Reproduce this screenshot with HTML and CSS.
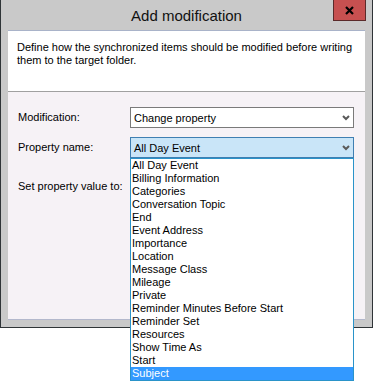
FILE: index.html
```html
<!DOCTYPE html>
<html>
<head>
<meta charset="utf-8">
<link rel="stylesheet" href="styles.css">
</head>
<body>
<div class="window">
  <div class="titlebar">
    <span class="title">Add modification</span>
    <div class="close">
      <svg width="9" height="9" viewBox="0 0 9 9"><path d="M1 1 L8 8 M8 1 L1 8" stroke="#000" stroke-width="2.2" fill="none"/></svg>
    </div>
  </div>
  <div class="client">
    <div class="header">
      <p>Define how the synchronized items should be modified before writing them to the target folder.</p>
    </div>
    <div class="body">
      <div class="row">
        <span class="label">Modification:</span>
        <div class="combo-wrap">
          <div class="combo"><span>Change property</span>
            <svg class="chev" width="8" height="6" viewBox="0 0 8 6"><polyline points="1,1 4,4 7,1" fill="none" stroke="#5a5a5a" stroke-width="2"/></svg>
          </div>
        </div>
      </div>
      <div class="row">
        <span class="label">Property name:</span>
        <div class="combo-wrap">
          <div class="combo open"><span>All Day Event</span>
            <svg class="chev" width="8" height="6" viewBox="0 0 8 6"><polyline points="1,1 4,4 7,1" fill="none" stroke="#5a5a5a" stroke-width="2"/></svg>
          </div>
          <ul class="dropdown">
            <li>All Day Event</li>
            <li>Billing Information</li>
            <li>Categories</li>
            <li>Conversation Topic</li>
            <li>End</li>
            <li>Event Address</li>
            <li>Importance</li>
            <li>Location</li>
            <li>Message Class</li>
            <li>Mileage</li>
            <li>Private</li>
            <li>Reminder Minutes Before Start</li>
            <li>Reminder Set</li>
            <li>Resources</li>
            <li>Show Time As</li>
            <li>Start</li>
            <li class="sel">Subject</li>
          </ul>
        </div>
      </div>
      <div class="row top">
        <span class="label">Set property value to:</span>
      </div>
    </div>
  </div>
</div>
</body>
</html>
```
FILE: styles.css
```css
html {
  background: #fff;
}
body {
  margin: 0;
  min-height: 382px;
  background: #fff;
  font-family: "Liberation Sans", Arial, sans-serif;
  font-size: 11px;
  color: #000;
}
.window {
  width: 373px;
  height: 328px;
  box-sizing: border-box;
  background: #c9c9c9;
  border: 1px solid #2f3437;
  border-top: none;
  display: flex;
  flex-direction: column;
  position: relative;
}
.titlebar {
  height: 30px;
  display: flex;
  align-items: center;
  justify-content: center;
  position: relative;
}
.title {
  font-size: 15px;
  color: #111;
  padding-top: 1px;
}
.close {
  position: absolute;
  top: 0;
  right: 6px;
  width: 33px;
  height: 21px;
  box-sizing: border-box;
  background: #c75050;
  border: 1px solid #5b2a2a;
  border-top: none;
  display: flex;
  align-items: center;
  justify-content: center;
}
.client {
  margin: 0 7px 7px 7px;
  flex: 1;
  display: flex;
  flex-direction: column;
  border-top: 1px solid #a9b3c9;
  border-bottom: 1px solid #b3b8cc;
}
.header {
  background: #fff;
  height: 61px;
  box-sizing: border-box;
  border-bottom: 1px solid #a0a0a0;
  padding: 10px 9px 0 9px;
}
.header p {
  margin: 0;
  line-height: 13px;
}
.body {
  flex: 1;
  background: #f6f2f6;
  padding: 15px 11px 0 10px;
  display: flex;
  flex-direction: column;
  gap: 9px;
}
.row {
  display: flex;
  align-items: center;
}
.row.top {
  align-items: flex-start;
  margin-top: 13px;
}
.label {
  width: 112px;
  line-height: 13px;
}
.combo-wrap {
  position: relative;
  width: 224px;
}
.combo {
  height: 21px;
  box-sizing: border-box;
  border: 1px solid #7a7a7a;
  background: #fff;
  display: flex;
  align-items: center;
  justify-content: space-between;
  padding: 0 3px 0 3px;
}
.combo.open {
  background: #c9e5f8;
  border-color: #3f7fb2;
}
.chev {
  display: block;
}
.dropdown {
  position: absolute;
  left: 0;
  top: 100%;
  width: 224px;
  box-sizing: border-box;
  border: 1px solid #2a93c9;
  background: #fff;
  margin: 0;
  padding: 0;
  list-style: none;
  z-index: 2;
}
.dropdown li {
  height: 13px;
  line-height: 13px;
  padding-left: 1px;
  white-space: nowrap;
}
.dropdown li.sel {
  background: #3399ff;
  color: #fff;
}
```
